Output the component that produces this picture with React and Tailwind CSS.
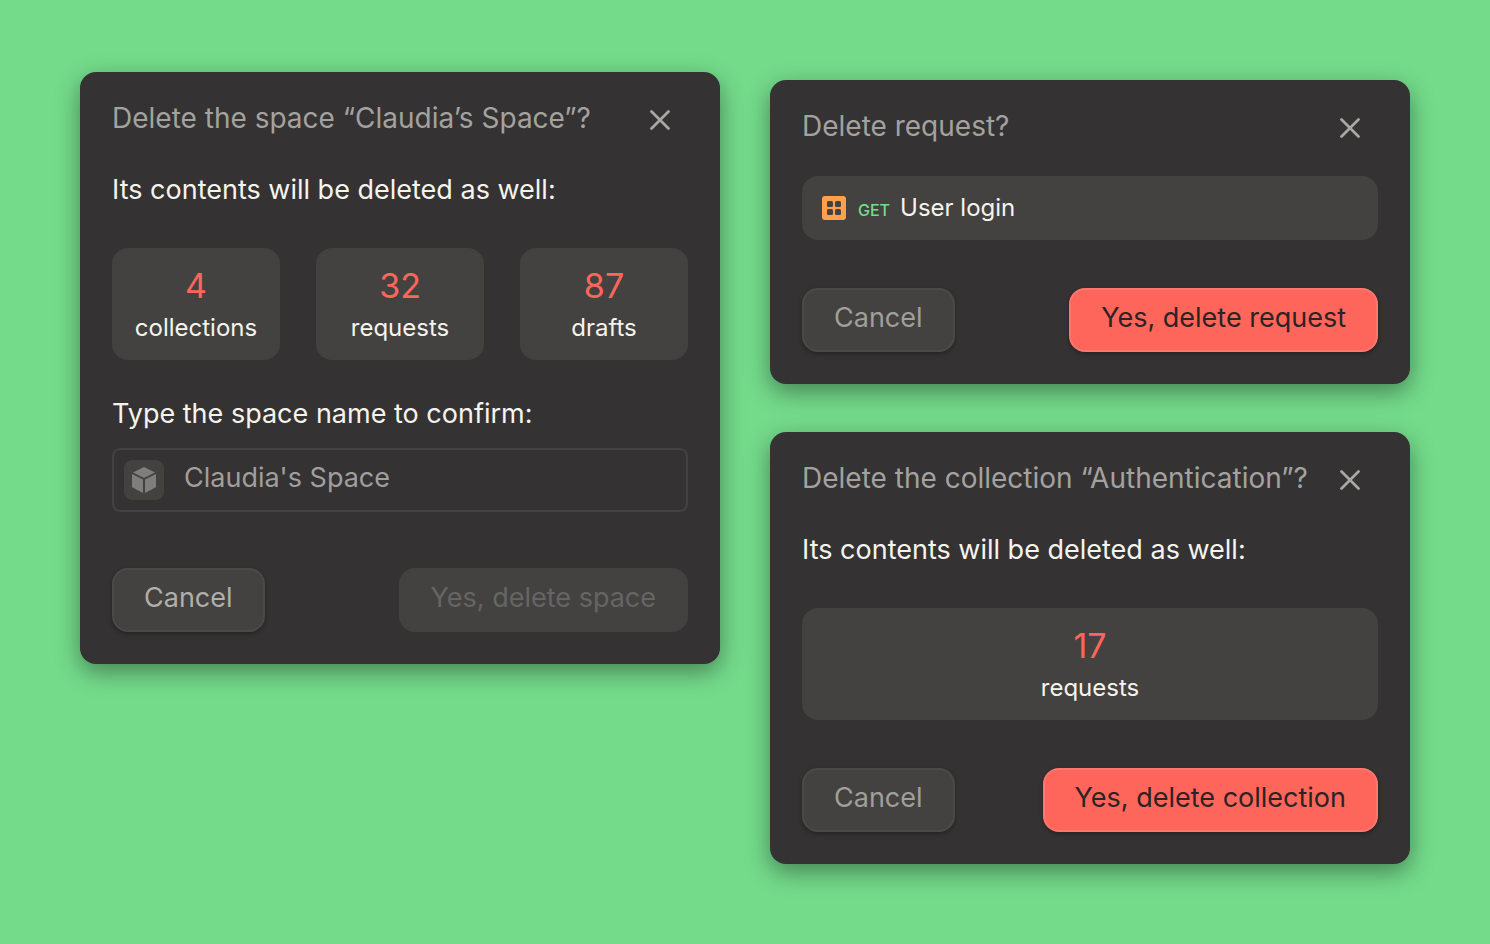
import React, { useState } from "react";

const Dialog = ({ title, children }) => (
  <section
    role="dialog"
    aria-label={title}
    className="rounded-2xl bg-[#343233] p-8 shadow-[0_8px_24px_rgba(0,0,0,0.4)]"
  >
    <header className="flex items-center justify-between">
      <h2 className="pb-1 text-[28px] leading-7 whitespace-nowrap text-[#a3a29e]">{title}</h2>
      <button type="button" aria-label="Close" className="flex h-8 w-14 items-center justify-center text-[#a9a8a6]">
        <svg width="20" height="20" viewBox="0 0 20 20" fill="none" stroke="currentColor" strokeWidth="2.7" strokeLinecap="round">
          <path d="M1.5 1.5l17 17M18.5 1.5l-17 17" />
        </svg>
      </button>
    </header>
    {children}
  </section>
);

const Stat = ({ value, label }) => (
  <div className="rounded-2xl bg-[#434240] pt-5 pb-3 text-center">
    <p className="text-[34px] leading-9 text-[#ff665b]">{value}</p>
    <p className="mt-1 text-2xl leading-10 text-[#f5f4ec]">{label}</p>
  </div>
);

const CancelButton = ({ className = "text-[#a09f9c]" }) => (
  <button
    type="button"
    className={`h-16 rounded-2xl border-2 border-[#4b4a49] bg-[#434240] px-[30px] pb-1 text-[27px] shadow-[0_2px_4px_rgba(0,0,0,0.3)] ${className}`}
  >
    Cancel
  </button>
);

const DangerButton = ({ children }) => (
  <button
    type="button"
    className="h-16 rounded-2xl border-2 border-[#ff766d] bg-[#ff665b] px-[30px] pb-1 text-[27px] whitespace-nowrap text-[#2a2424] shadow-[0_2px_4px_rgba(0,0,0,0.3)]"
  >
    {children}
  </button>
);

const CubeIcon = () => (
  <svg width="24" height="26" viewBox="0 0 24 26" fill="#7f7e7d" aria-hidden="true">
    <path d="M12 0L23 5.4L12 11L1 5.4Z" />
    <path d="M0 7L11 12.6V26L1 20.8Q0 20.2 0 19.2Z" />
    <path d="M24 7L13 12.6V26L23 20.8Q24 20.2 24 19.2Z" />
  </svg>
);

const CollectionIcon = () => (
  <svg width="24" height="24" viewBox="0 0 24 24" aria-hidden="true">
    <rect width="24" height="24" rx="3" fill="#ffa04d" />
    <g fill="#434240">
      <rect x="5" y="5" width="6" height="6" rx="1.5" />
      <rect x="13" y="5" width="6" height="6" rx="1.5" />
      <rect x="5" y="13" width="6" height="6" rx="1.5" />
      <rect x="13" y="13" width="6" height="6" rx="1.5" />
    </g>
  </svg>
);

const DeleteSpace = () => {
  const [name, setName] = useState("");

  return (
    <Dialog title="Delete the space “Claudia’s Space”?">
      <p className="mt-10 pb-1 text-[27px] leading-7 text-[#f5f4ec]">Its contents will be deleted as well:</p>
      <div className="mt-10 grid grid-cols-3 gap-9">
        <Stat value="4" label="collections" />
        <Stat value="32" label="requests" />
        <Stat value="87" label="drafts" />
      </div>
      <label htmlFor="space-name" className="mt-10 block pb-1 text-[27px] leading-7 text-[#f5f4ec]">
        Type the space name to confirm:
      </label>
      <div className="mt-4 flex h-16 items-center gap-5 rounded-lg border-2 border-[#434143] px-2.5">
        <span className="flex h-10 w-10 shrink-0 items-center justify-center rounded-lg bg-[#434240]">
          <CubeIcon />
        </span>
        <input
          id="space-name"
          type="text"
          value={name}
          onChange={(e) => setName(e.target.value)}
          placeholder="Claudia's Space"
          className="w-full min-w-0 bg-transparent pb-1 text-[27px] leading-8 text-[#f5f4ec] outline-none placeholder:text-[#a09f9c]"
        />
      </div>
      <div className="mt-14 flex justify-between">
        <CancelButton className="text-[#b0afac]" />
        <button
          type="button"
          disabled={name !== "Claudia's Space"}
          className="h-16 rounded-2xl bg-[#434240] px-8 pb-1 text-[27px] whitespace-nowrap text-[#666563]"
        >
          Yes, delete space
        </button>
      </div>
    </Dialog>
  );
};

const DeleteRequest = () => (
  <Dialog title="Delete request?">
    <div className="mt-8 flex h-16 items-center rounded-2xl bg-[#434240] px-5">
      <CollectionIcon />
      <p className="ml-3 flex items-baseline gap-2.5 pb-px">
        <span className="text-base font-medium text-[#74dc8c]">GET</span>
        <span className="text-2xl text-[#f5f4ec]">User login</span>
      </p>
    </div>
    <div className="mt-12 flex justify-between">
      <CancelButton />
      <DangerButton>Yes, delete request</DangerButton>
    </div>
  </Dialog>
);

const DeleteCollection = () => (
  <Dialog title="Delete the collection “Authentication”?">
    <p className="mt-10 pb-1 text-[27px] leading-7 text-[#f5f4ec]">Its contents will be deleted as well:</p>
    <div className="mt-10 grid">
      <Stat value="17" label="requests" />
    </div>
    <div className="mt-12 flex justify-between">
      <CancelButton />
      <DangerButton>Yes, delete collection</DangerButton>
    </div>
  </Dialog>
);

const App = () => (
  <main className="grid min-h-screen grid-cols-2 items-start gap-[50px] bg-[#74db8b] px-20 pt-[72px] pb-20 font-[Inter,sans-serif]">
    <DeleteSpace />
    <div className="flex flex-col gap-12 pt-2">
      <DeleteRequest />
      <DeleteCollection />
    </div>
  </main>
);

export default App;
